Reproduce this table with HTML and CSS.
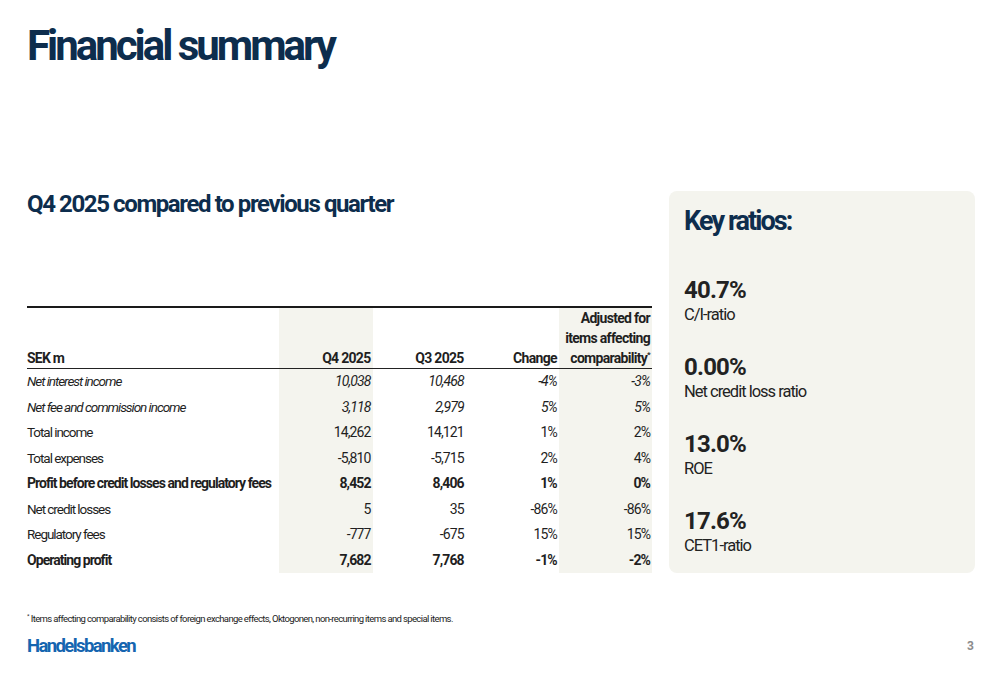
FILE: index.html
```html
<!DOCTYPE html>
<html lang="en">
<head>
<meta charset="utf-8">
<title>Financial summary</title>
<link rel="stylesheet" href="styles.css">
</head>
<body>
<div class="slide">
  <h1 class="title">Financial summary</h1>
  <div class="main">
    <section class="left">
      <h2 class="subtitle">Q4 2025 compared to previous quarter</h2>
      <table class="fin">
        <thead>
          <tr>
            <th class="label">SEK m</th>
            <th class="num shade">Q4 2025</th>
            <th class="num">Q3 2025</th>
            <th class="num">Change</th>
            <th class="num shade adj">Adjusted for<br>items affecting<br>comparability<sup>*</sup></th>
          </tr>
        </thead>
        <tbody>
          <tr class="it"><td class="label">Net interest income</td><td class="num shade">10,038</td><td class="num">10,468</td><td class="num">-4%</td><td class="num shade">-3%</td></tr>
          <tr class="it"><td class="label">Net fee and commission income</td><td class="num shade">3,118</td><td class="num">2,979</td><td class="num">5%</td><td class="num shade">5%</td></tr>
          <tr><td class="label">Total income</td><td class="num shade">14,262</td><td class="num">14,121</td><td class="num">1%</td><td class="num shade">2%</td></tr>
          <tr><td class="label">Total expenses</td><td class="num shade">-5,810</td><td class="num">-5,715</td><td class="num">2%</td><td class="num shade">4%</td></tr>
          <tr class="bold"><td class="label">Profit before credit losses and regulatory fees</td><td class="num shade">8,452</td><td class="num">8,406</td><td class="num">1%</td><td class="num shade">0%</td></tr>
          <tr><td class="label">Net credit losses</td><td class="num shade">5</td><td class="num">35</td><td class="num">-86%</td><td class="num shade">-86%</td></tr>
          <tr><td class="label">Regulatory fees</td><td class="num shade">-777</td><td class="num">-675</td><td class="num">15%</td><td class="num shade">15%</td></tr>
          <tr class="bold"><td class="label">Operating profit</td><td class="num shade">7,682</td><td class="num">7,768</td><td class="num">-1%</td><td class="num shade">-2%</td></tr>
        </tbody>
      </table>
    </section>
    <aside class="panel">
      <h2 class="panel-title">Key ratios:</h2>
      <div class="ratios">
        <div class="ratio"><div class="ratio-value">40.7%</div><div class="ratio-label">C/I-ratio</div></div>
        <div class="ratio"><div class="ratio-value">0.00%</div><div class="ratio-label">Net credit loss ratio</div></div>
        <div class="ratio"><div class="ratio-value">13.0%</div><div class="ratio-label">ROE</div></div>
        <div class="ratio"><div class="ratio-value">17.6%</div><div class="ratio-label">CET1-ratio</div></div>
      </div>
    </aside>
  </div>
  <p class="footnote"><sup>*</sup> Items affecting comparability consists of foreign exchange effects, Oktogonen, non-recurring items and special items.</p>
  <div class="footer">
    <span class="logo">Handelsbanken</span>
    <span class="page">3</span>
  </div>
</div>
</body>
</html>
```
FILE: styles.css
```css
* { box-sizing: border-box; }
html, body { margin: 0; padding: 0; background: #fff; }
body {
  font-family: Roboto, "Liberation Sans", sans-serif;
  color: #1f1f1f;
  width: 1000px;
  height: 685px;
  overflow: hidden;
}
.slide {
  padding: 0 25px 0 27px;
  height: 685px;
  display: flex;
  flex-direction: column;
}
.title {
  margin: 20px 0 0 0;
  font-size: 42px;
  line-height: 52px;
  font-weight: 700;
  letter-spacing: -3px;
  color: #0d2d4d;
}
.main {
  margin-top: 119px;
  display: flex;
  gap: 17px;
  height: 382px;
}
.left {
  width: 625px;
  display: flex;
  flex-direction: column;
  justify-content: space-between;
}
.subtitle {
  margin: 0;
  font-size: 24px;
  line-height: 26px;
  font-weight: 700;
  letter-spacing: -1.4px;
  color: #0d2d4d;
}
.fin {
  width: 625px;
  border-collapse: collapse;
  border-top: 2px solid #1a1a1a;
  font-size: 14px;
  letter-spacing: -0.9px;
  table-layout: fixed;
}
.fin th, .fin td { padding: 0 2px 0 0; white-space: nowrap; }
.fin th.label, .fin td.label { width: 252px; text-align: left; }
.fin td.label { font-size: 13.5px; letter-spacing: -1.05px; }
.fin tr.bold td.label { font-size: 14px; letter-spacing: -0.95px; }
.fin th.label { letter-spacing: -0.8px; }
.fin th.num, .fin td.num { width: 93px; text-align: right; }
.fin thead th {
  vertical-align: bottom;
  font-weight: 700;
  line-height: 20px;
  letter-spacing: -0.7px;
  padding-top: 0;
  padding-bottom: 0;
  height: 60px;
  border-bottom: 1px solid #222;
}
.fin tbody td { height: 25.5px; line-height: 25.5px; }
.fin sup { font-size: 8px; line-height: 0; vertical-align: 6px; }
.fin .shade { background: #f4f4ee; }
.fin tr.it td { font-style: italic; }
.fin tr.bold td { font-weight: 700; }
.panel {
  width: 306px;
  background: #f4f4ee;
  border-radius: 8px;
  padding: 14px 15px;
}
.panel-title {
  margin: 0;
  font-size: 27px;
  line-height: 32px;
  font-weight: 700;
  letter-spacing: -1.9px;
  color: #0d2d4d;
}
.ratios {
  margin-top: 40px;
  display: flex;
  flex-direction: column;
  gap: 27px;
}
.ratio-value {
  font-size: 24px;
  line-height: 26px;
  font-weight: 700;
  letter-spacing: -0.8px;
  color: #222;
}
.ratio-label {
  font-size: 16.5px;
  line-height: 24px;
  letter-spacing: -1px;
  color: #222;
}
.footnote {
  margin: 39px 0 0 0;
  font-size: 9.5px;
  line-height: 14px;
  letter-spacing: -0.63px;
  color: #222;
}
.footnote sup { font-size: 6px; vertical-align: 4px; line-height: 0; }
.footer {
  margin-top: 9px;
  display: flex;
  justify-content: space-between;
  align-items: center;
}
.logo {
  font-size: 18.5px;
  font-weight: 700;
  letter-spacing: -1.6px;
  color: #1565b0;
}
.page {
  font-size: 12px;
  font-weight: 700;
  color: #8c8c8c;
  margin-right: 1px;
}
```
